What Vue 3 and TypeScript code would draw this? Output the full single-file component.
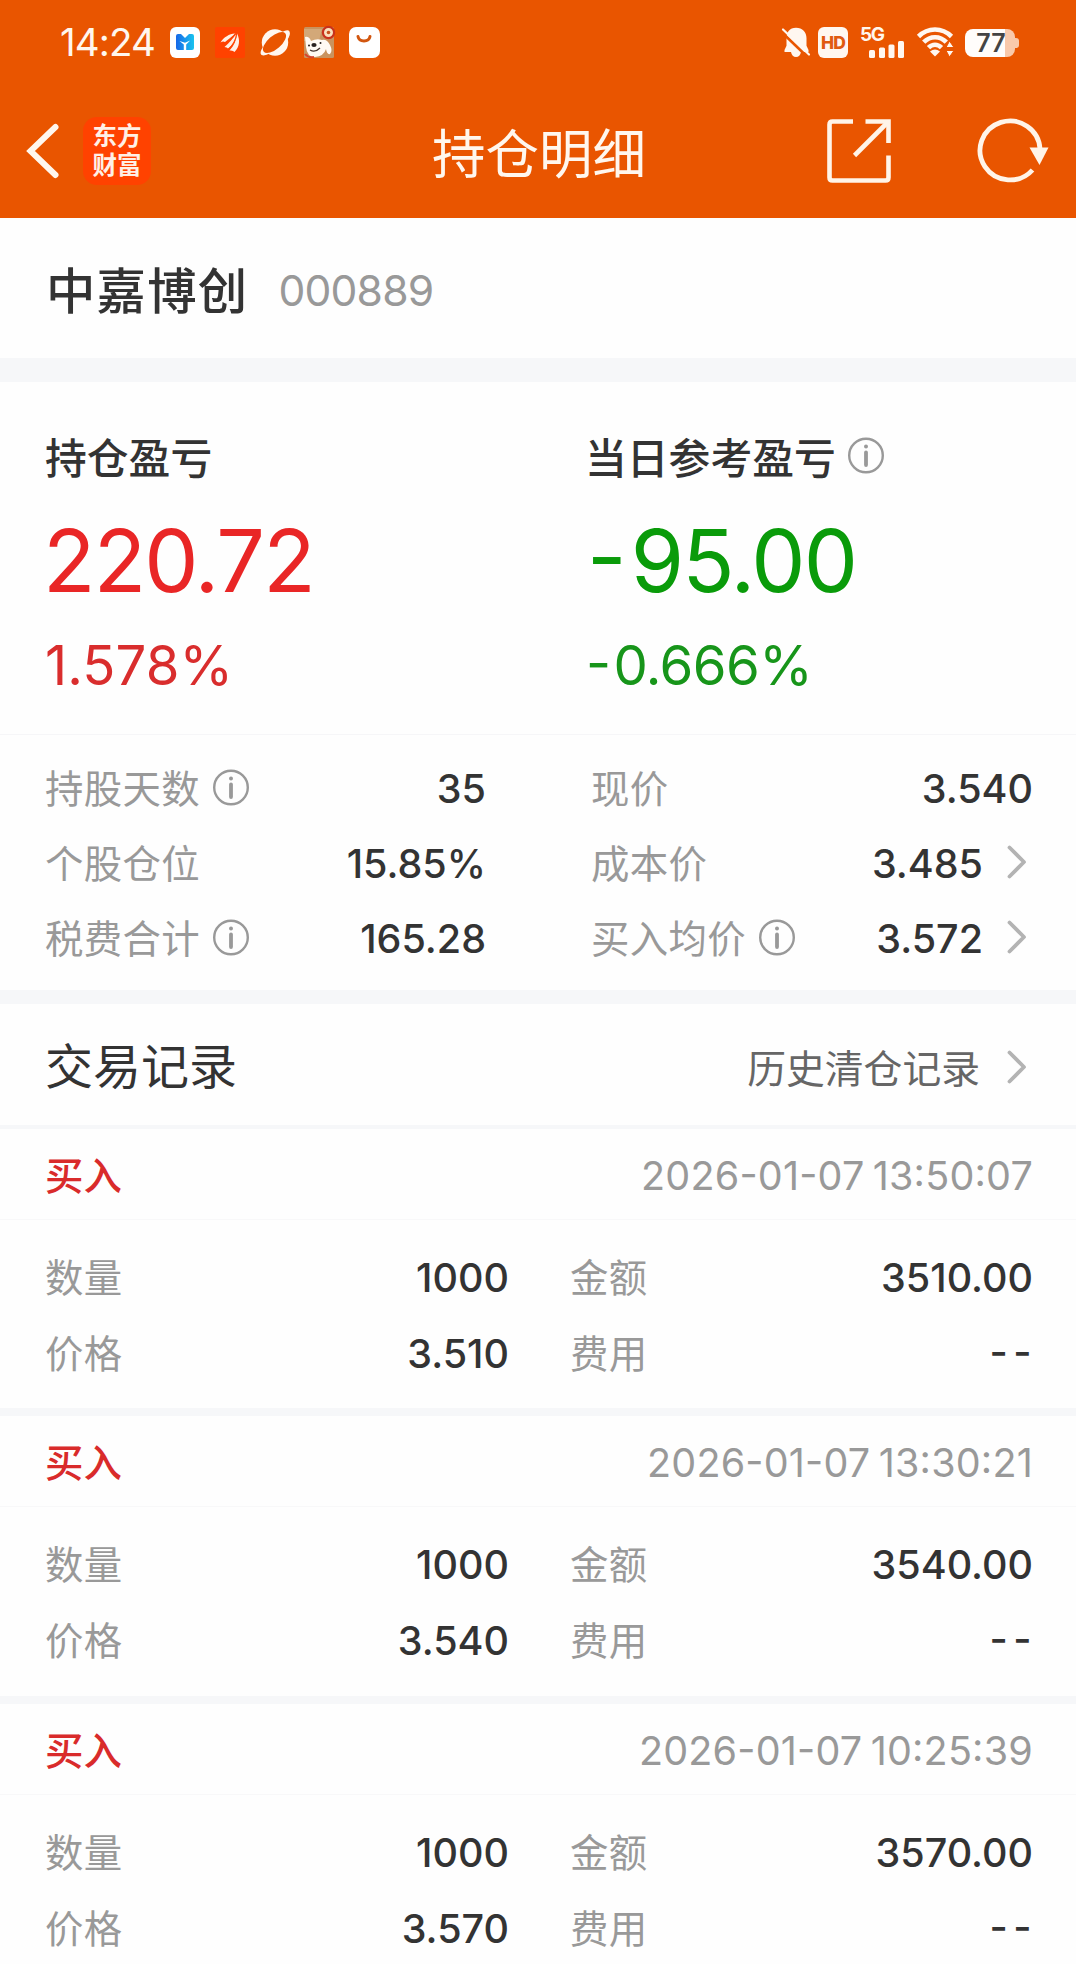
<script setup lang="ts">
interface Metric {
  label: string
  value: string
  info?: boolean
  link?: boolean
}

interface Trade {
  time: string
  quantity: string
  amount: string
  price: string
  fee: string
}

const leftMetrics: Metric[] = [
  { label: '持股天数', value: '35', info: true },
  { label: '个股仓位', value: '15.85%' },
  { label: '税费合计', value: '165.28', info: true },
]

const rightMetrics: Metric[] = [
  { label: '现价', value: '3.540' },
  { label: '成本价', value: '3.485', link: true },
  { label: '买入均价', value: '3.572', info: true, link: true },
]

const trades: Trade[] = [
  { time: '2026-01-07 13:50:07', quantity: '1000', amount: '3510.00', price: '3.510', fee: '--' },
  { time: '2026-01-07 13:30:21', quantity: '1000', amount: '3540.00', price: '3.540', fee: '--' },
  { time: '2026-01-07 10:25:39', quantity: '1000', amount: '3570.00', price: '3.570', fee: '--' },
]
</script>

<template>
  <div class="page">
    <header class="top">
      <div class="status">
        <span class="clock">14:24</span>
        <div class="apps">
          <svg width="30" height="31" viewBox="0 0 30 31">
            <defs>
              <linearGradient id="mg" x1="0" x2="1">
                <stop offset="0" stop-color="#1767e8" />
                <stop offset="1" stop-color="#19c3ee" />
              </linearGradient>
            </defs>
            <rect width="30" height="31" rx="6" fill="#fff" />
            <path d="M6 9q0-2 2-2h3l4 4 4-4h3q2 0 2 2v12q0 2-2 2H8q-2 0-2-2z" fill="url(#mg)" />
            <path d="M9.500 14l4.300 3.500v5.800h2.400v-5.800l4-4-5.200 2.200z" fill="#fff" />
          </svg>
          <svg width="30" height="31" viewBox="0 0 30 31">
            <rect width="30" height="31" rx="2" fill="#ff4200" />
            <g fill="#fff0e6">
              <path d="M5.500 15.500C9 10 14 7 20 6.500 17 9.500 14 12 10 15q-2-1-4.500.500z" />
              <path d="M9.500 20C14 16 18 12 21 6.500 22 12 18 18 13 21.500q-1-1.500-3.500-1.500z" />
              <path d="M14.500 23.500C19 19 21.500 13 22 6.500 25.500 13 24.500 20 19.500 25q-1.500-2-5-1.500z" />
            </g>
            <path d="M8 18C14 14 18 11 20.500 7M13 23C18 18 21 13 21.500 7" fill="none" stroke="#ff4200" stroke-width="1.100" />
          </svg>
          <svg width="30" height="31" viewBox="0 0 30 31">
            <circle cx="15" cy="15.500" r="13.200" fill="#fff7f0" />
            <path d="M3 20Q-1 26 1.500 28q3 1.500 9-2zM22 5q6-3 7.500-.5Q31 8 27 13z" fill="#fff7f0" />
            <ellipse cx="14.500" cy="15.500" rx="14.200" ry="6.600" transform="rotate(-41 14.500 15.500)" fill="#e95500" />
          </svg>
          <svg width="30" height="31" viewBox="0 0 30 31">
            <rect width="30" height="31" rx="1.500" fill="#c9935e" />
            <path d="M0 2h18l-3 12H0z" fill="#d3a878" />
            <path d="M1 10q4-1 6 4 6-3 11-1 5-1 8 5 3 6 0 9-3 1-4-5-2 7-11 8Q3 30 2 20z" fill="#fffaf4" />
            <circle cx="24.500" cy="5.500" r="5.600" fill="#fae1bd" stroke="#c9321c" stroke-width="2.200" />
            <circle cx="24.500" cy="5.500" r="1.800" fill="#c8501c" />
            <ellipse cx="10" cy="18" rx="2.600" ry="2" fill="#28211f" />
            <circle cx="5" cy="18.500" r="1" fill="#28211f" />
            <circle cx="16.500" cy="16" r="1" fill="#28211f" />
            <path d="M6 23q5 3 10-2" fill="none" stroke="#453530" stroke-width="1.300" />
            <path d="M1 27q3 4 9 3" fill="none" stroke="#d6452f" stroke-width="2" />
          </svg>
          <svg width="31" height="31" viewBox="0 0 31 31">
            <rect width="31" height="31" rx="7" fill="#fff" />
            <path d="M9 9.500c1.200 6 10.800 6 12 0" fill="none" stroke="#d2560f" stroke-width="3" stroke-linecap="round" />
          </svg>
        </div>
        <div class="signals">
          <svg class="bell" width="28" height="31" viewBox="0 0 28 31">
            <path d="M14 .8c6.500 0 10.500 4.500 10.500 10.500v7.500l2 4.200v2H2.500v-2l2-4.200v-7.500C4.500 5.300 7.500.8 14 .8z" fill="#fff7f0" />
            <path d="M9 25h10q-1 5-5 5t-5-5z" fill="#fff7f0" />
            <path d="M-.5 5L25 29.500" stroke="#e95500" stroke-width="2.600" />
            <path d="M1 2.500L27 27.500" stroke="#fff7f0" stroke-width="2.200" stroke-linecap="round" />
          </svg>
          <span class="hd">HD</span>
          <div class="cell">
            <span class="net">5G</span>
            <svg width="36" height="17" viewBox="0 0 36 17" fill="#fff7f0">
              <rect x="0" y="9" width="6" height="8" rx="1.500" />
              <rect x="10" y="6.500" width="6" height="10.500" rx="1.500" />
              <rect x="19.500" y="3.500" width="6" height="13.500" rx="1.500" />
              <rect x="29" y="0" width="6" height="17" rx="1.500" />
            </svg>
          </div>
          <svg class="wifi" width="37" height="30" viewBox="0 0 37 30">
            <g fill="none" stroke="#fff7f0" stroke-width="4.600">
              <path d="M1.500 9.500C11 .2 25 .2 34.500 9.500" />
              <path d="M6.700 15.200c6.600-6.700 16.200-6.700 22.600 0" />
              <path d="M11.500 20.700c4-4 9-4 13 0" />
            </g>
            <path d="M13 24.500q5-4 10 0L18 29.500z" fill="#fff7f0" />
            <path d="M32.500 14l4.500 6.500h-8zM32.500 30l4.500-6.500h-8z" fill="#fff7f0" stroke="#e95500" stroke-width="1" />
          </svg>
          <div class="battery"><div class="cellbody">77</div><i class="nub"></i></div>
        </div>
      </div>

      <nav class="nav">
        <svg class="back" width="34" height="58" viewBox="0 0 34 58">
          <path d="M30.500 5L5.500 29l25 24" fill="none" stroke="#fff7ee" stroke-width="6" stroke-linecap="round" />
        </svg>
        <div class="logo"><span>东方</span><span>财富</span></div>
        <h1>持仓明细</h1>
        <svg class="share" width="64" height="64" viewBox="0 0 64 64">
          <g fill="none" stroke="#fff4e8" stroke-width="4.600">
            <path d="M26 2.500H5.500q-3 0-3 3v53q0 3 3 3h53q3 0 3-3V36.500" />
            <path d="M38.500 2.500h23V24" />
            <path d="M61 3L27.500 36.500" />
          </g>
        </svg>
        <svg class="reload" width="72" height="64" viewBox="0 0 72 64">
          <path d="M62 30A30 29.500 0 1 0 54.500 51" fill="none" stroke="#fff4e8" stroke-width="4.800" />
          <path d="M51.500 28.500H70.500L61.500 46z" fill="#fff4e8" />
        </svg>
      </nav>
    </header>

    <section class="stock">
      <h2>中嘉博创</h2>
      <span class="code">000889</span>
    </section>

    <section class="summary">
      <div class="pl up">
        <div class="pl-title">持仓盈亏</div>
        <div class="pl-value">220.72</div>
        <div class="pl-rate">1.578%</div>
      </div>
      <div class="pl down">
        <div class="pl-title">
          当日参考盈亏
          <svg class="info" width="36" height="37" viewBox="0 0 36 37">
            <circle cx="18" cy="18.500" r="16.800" /><circle class="dot" cx="18" cy="9.500" r="2" /><path d="M18 15.500v12.500" />
          </svg>
        </div>
        <div class="pl-value"><span class="sign">-</span>95.00</div>
        <div class="pl-rate"><span class="sign">-</span>0.666%</div>
      </div>
    </section>

    <section class="metrics">
      <div v-for="(col, i) in [leftMetrics, rightMetrics]" :key="i" class="metric-col">
        <div v-for="m in col" :key="m.label" class="metric">
          <span class="label">{{ m.label }}</span>
          <svg v-if="m.info" class="info" width="36" height="37" viewBox="0 0 36 37">
            <circle cx="18" cy="18.500" r="16.800" /><circle class="dot" cx="18" cy="9.500" r="2" /><path d="M18 15.500v12.500" />
          </svg>
          <span class="value">{{ m.value }}</span>
          <svg v-if="m.link" class="chev" width="20" height="34" viewBox="0 0 20 34"><path d="M2.500 2.500L17 17 2.500 31.500" /></svg>
        </div>
      </div>
    </section>

    <section class="records">
      <h3>交易记录</h3>
      <span class="history">历史清仓记录</span>
      <svg class="chev" width="20" height="34" viewBox="0 0 20 34"><path d="M2.500 2.500L17 17 2.500 31.500" /></svg>
    </section>

    <article v-for="t in trades" :key="t.time" class="trade">
      <div class="trade-head">
        <span class="side">买入</span>
        <time>{{ t.time }}</time>
      </div>
      <div class="trade-body">
        <div class="pair"><span class="label">数量</span><span class="value">{{ t.quantity }}</span></div>
        <div class="pair"><span class="label">金额</span><span class="value">{{ t.amount }}</span></div>
        <div class="pair"><span class="label">价格</span><span class="value">{{ t.price }}</span></div>
        <div class="pair"><span class="label">费用</span><span class="value dashes">{{ t.fee }}</span></div>
      </div>
    </article>
  </div>
</template>

<style>
body {
  margin: 0;
  background: #fefefe;
}
</style>

<style scoped>
.page {
  width: 1076px;
  height: 1964px;
  overflow: hidden;
  background: #fefefe;
  color: #333;
  font-family: Inter, "Noto Sans CJK SC", sans-serif;
}
.page * {
  box-sizing: border-box;
}
svg {
  display: block;
  flex: none;
  overflow: visible;
}
h1, h2, h3 {
  margin: 0;
}
.top {
  height: 218px;
  background: #e95500;
  color: #fff7ee;
}
.status {
  display: flex;
  align-items: center;
  height: 84px;
  padding: 0 57px 0 60px;
}
.clock {
  width: 110px;
  font-size: 38.5px;
  line-height: 50px;
  letter-spacing: -0.9px;
}
.apps {
  display: flex;
  gap: 14.800px;
}
.signals {
  display: flex;
  align-items: center;
  margin-left: auto;
}
.bell {
  margin-right: 8px;
}
.hd {
  width: 30px;
  height: 31px;
  border-radius: 6px;
  background: #fff7f0;
  color: #e05a10;
  font: 800 17.500px/31px Inter, sans-serif;
  text-align: center;
  letter-spacing: -0.8px;
}
.cell {
  display: flex;
  flex-direction: column;
  width: 45px;
  height: 31px;
  margin: 0 12px;
}
.cell svg {
  margin-left: 9px;
}
.net {
  height: 14px;
  font-size: 19px;
  font-weight: 700;
  line-height: 15px;
  letter-spacing: -1.4px;
}
.wifi {
  margin-right: 11px;
}
.battery {
  display: flex;
  align-items: center;
  margin-top: 2px;
}
.cellbody {
  width: 50px;
  height: 28px;
  border-radius: 8px;
  background: linear-gradient(90deg, #fffdfb 40px, #f9c9ab 40px);
  color: #444;
  font-size: 25px;
  font-weight: 600;
  line-height: 29px;
  text-align: center;
  padding-left: 2px;
}
.nub {
  width: 4px;
  height: 10px;
  border-radius: 0 3px 3px 0;
  background: #f9c9ab;
}
.nav {
  display: flex;
  align-items: center;
  height: 134px;
  padding: 0 25px;
}
.logo {
  display: flex;
  flex-direction: column;
  align-items: center;
  width: 68px;
  height: 68px;
  margin-left: 24px;
  padding-top: 5px;
  border-radius: 14px;
  background: #ff4200;
  color: #fff0e6;
  font-size: 24.500px;
  font-weight: 700;
  line-height: 29px;
}
.nav h1 {
  margin: 7px 0 0 281px;
  font-size: 53.500px;
  font-weight: 400;
  line-height: 70px;
}
.share {
  margin-left: auto;
  margin-right: 87px;
}
.reload {
  margin-right: 1px;
}
.stock {
  display: flex;
  align-items: center;
  height: 164px;
  padding: 4px 0 0 46px;
  border-bottom: 24px solid #f6f7f9;
}
.stock h2 {
  margin-top: 2px;
  font-size: 49.400px;
  font-weight: 500;
  letter-spacing: 1.2px;
  line-height: 60px;
}
.code {
  margin: 1px 0 0 30px;
  color: #999;
  font-size: 42.600px;
  line-height: 60px;
  letter-spacing: -0.8px;
}
.summary {
  display: flex;
  height: 353px;
  padding: 45px 0 0 45px;
  border-bottom: 1px solid #f6f6f8;
}
.pl {
  flex: none;
  width: 540px;
}
.pl-title {
  display: flex;
  align-items: center;
  gap: 12px;
  height: 60px;
  padding-top: 3px;
  font-size: 41.800px;
  font-weight: 500;
  line-height: 60px;
}
.pl-title .info {
  margin-top: -7px;
}
.pl-value,
.pl-rate,
.value,
time {
  font-feature-settings: "case";
}
.pl-value {
  margin-top: 24px;
  margin-left: -2px;
  font-size: 86px;
  line-height: 100px;
  letter-spacing: -1.8px;
}
.pl-rate {
  margin-top: 24px;
  font-size: 54.500px;
  line-height: 60px;
  letter-spacing: 0.1px;
}
.down .pl-rate {
  letter-spacing: -0.6px;
}
.pl-value .sign {
  margin: 0 6px 0 4px;
}
.pl-rate .sign {
  margin: 0 3px 0 1px;
}
.up .pl-value { color: #e92626; }
.up .pl-rate { color: #d92d2d; }
.down .pl-value { color: #0a9b0a; }
.down .pl-rate { color: #17951a; }
.info {
  fill: none;
  stroke: #999;
  stroke-width: 2.400;
}
.info path {
  stroke-width: 3.800;
  stroke-linecap: round;
}
.info .dot {
  fill: #999;
  stroke: none;
}
.chev {
  fill: none;
  stroke: #b3b3b3;
  stroke-width: 3.800;
  stroke-linecap: round;
  stroke-linejoin: round;
}
.metrics {
  display: grid;
  grid-template-columns: 441px 442px;
  column-gap: 105px;
  height: 269px;
  padding: 16px 0 0 45px;
  border-bottom: 14px solid #f6f7f9;
}
.metric {
  display: flex;
  align-items: center;
  height: 75px;
}
.metric .info {
  margin: -2px 0 0 13px;
}
.metric .chev {
  margin: -4px 6px 0 24px;
}
.label {
  color: #999;
  font-size: 38.400px;
  letter-spacing: 0.4px;
  line-height: 60px;
}
.value {
  margin-left: auto;
  font-size: 39.500px;
  font-weight: 500;
  line-height: 62px;
}
.records {
  display: flex;
  align-items: center;
  height: 124.500px;
  padding: 0 49px 0 45px;
  border-bottom: 4px solid #f6f7f9;
}
.records h3 {
  margin-top: 6px;
  font-size: 48px;
  font-weight: 400;
  line-height: 60px;
}
.history {
  margin: 9px 27px 0 auto;
  color: #666;
  font-size: 38.800px;
  line-height: 60px;
}
.records .chev {
  margin-top: 5px;
}
.trade {
  height: 287.600px;
  border-bottom: 8.500px solid #f6f7f9;
}
.trade-head {
  display: flex;
  align-items: center;
  justify-content: space-between;
  height: 91px;
  padding: 4px 43px 0 45px;
  border-bottom: 1px solid #f8f8f9;
}
.side {
  color: #d92b2b;
  font-size: 38.400px;
  font-weight: 500;
  line-height: 60px;
}
time {
  color: #999;
  font-size: 39.500px;
  line-height: 60px;
  letter-spacing: 0.2px;
  word-spacing: -3px;
}
.trade-body {
  display: grid;
  grid-template-columns: 464px 463px;
  grid-auto-rows: 76px;
  column-gap: 61px;
  padding: 20px 0 0 45px;
}
.pair {
  display: flex;
  align-items: center;
}
.dashes {
  letter-spacing: 5.500px;
  margin-right: -4px;
}
</style>
